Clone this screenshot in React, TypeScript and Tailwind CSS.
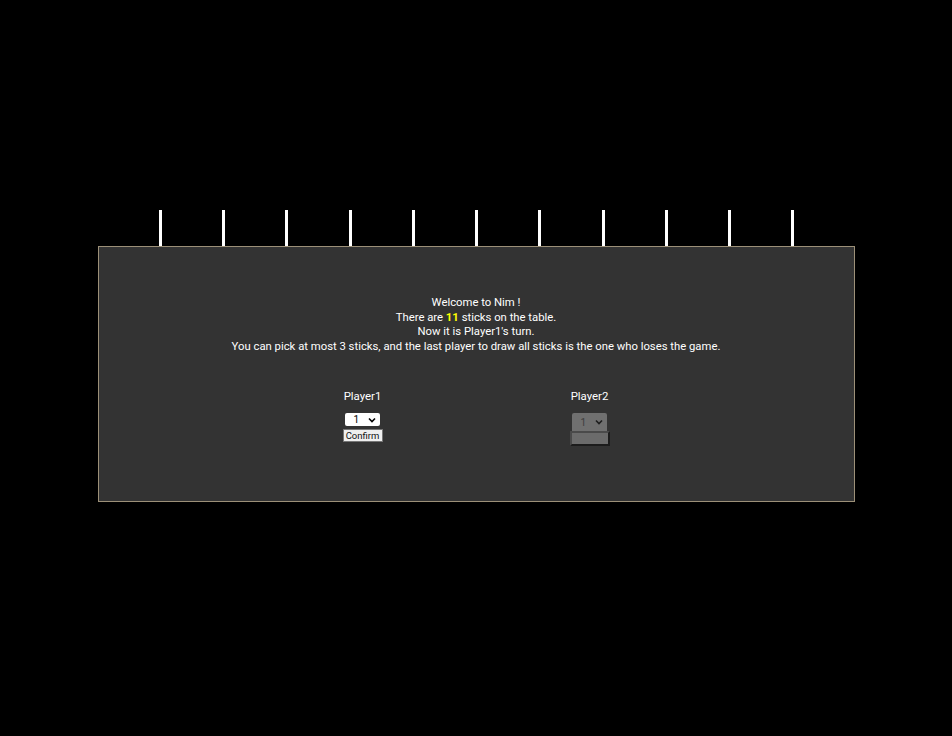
import React from "react";

function Chevron({ color }: { color: string }) {
  return (
    <svg width="8" height="6" viewBox="0 0 8 6" fill="none">
      <path d="M1 1.5 L4 4.5 L7 1.5" stroke={color} strokeWidth="1.6" />
    </svg>
  );
}

export default function App() {
  const sticks = Array.from({ length: 11 });
  return (
    <div
      className="w-[952px] h-[736px] bg-black text-white"
      style={{ fontFamily: "Roboto, 'Liberation Sans', sans-serif" }}
    >
      <div className="w-[757px] mx-auto pt-[210px]">
        <div className="flex justify-evenly h-[36px] pl-[1px]">
          {sticks.map((_, i) => (
            <div key={i} className="w-[3px] h-[36px] bg-white" />
          ))}
        </div>
        <div className="h-[256px] bg-[#333333] border border-[#9c9078] flex flex-col items-center">
          <div className="pt-[49px] text-center text-[11.3px] leading-[14.6px]">
            <div>Welcome to Nim !</div>
            <div>
              There are <span className="text-[#ffff00] font-bold">11</span> sticks on the table.
            </div>
            <div>Now it is Player1's turn.</div>
            <div>You can pick at most 3 sticks, and the last player to draw all sticks is the one who loses the game.</div>
          </div>
          <div className="flex mt-[34px]">
            <div className="w-[227px] flex flex-col items-center">
              <div className="text-[11.4px] leading-[16px]">Player1</div>
              <div className="mt-[9px] w-[35px] h-[13px] bg-white rounded-[2px] flex items-center justify-end pr-[4px] gap-[9px] text-black text-[10px] leading-[13px]">
                <span>1</span>
                <Chevron color="#000" />
              </div>
              <div className="mt-[3px] w-[40px] h-[13px] bg-[#efefef] border border-[#767676] flex items-center justify-center text-[#111] text-[9.5px] leading-[11px]">
                Confirm
              </div>
            </div>
            <div className="w-[227px] flex flex-col items-center">
              <div className="text-[11.4px] leading-[16px]">Player2</div>
              <div className="mt-[9px] w-[35px] h-[18px] bg-[#707070] rounded-t-[2px] flex items-center justify-end pr-[4px] gap-[9px] text-[#3c3c3c] text-[10px] leading-[13px]">
                <span>1</span>
                <Chevron color="#1e1e1e" />
              </div>
              <div className="w-[40px] h-[15px] bg-[#6b6b6b] border-t-2 border-l-2 border-[#4a4a4a] border-r-2 border-r-[#1c1c1c] border-b-2 border-b-[#1c1c1c]" />
            </div>
          </div>
        </div>
      </div>
    </div>
  );
}
